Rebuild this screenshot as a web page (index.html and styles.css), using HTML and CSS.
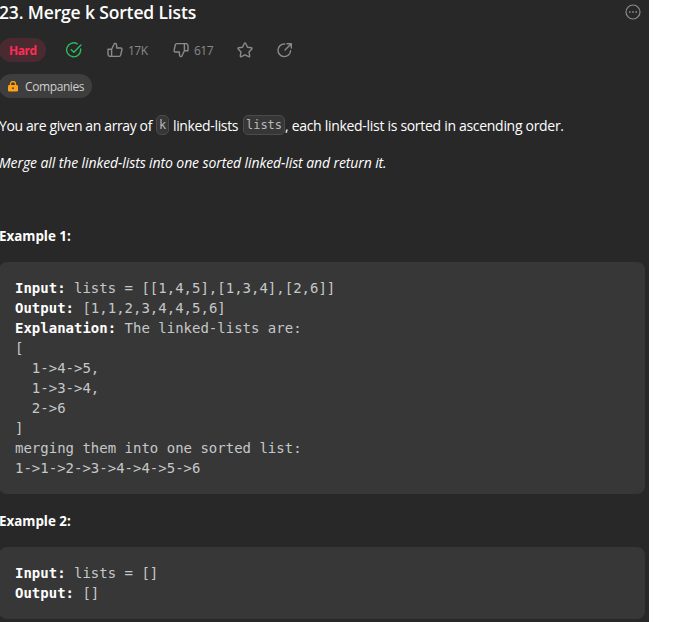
FILE: index.html
```html
<!DOCTYPE html>
<html lang="en">
<head>
<meta charset="utf-8">
<title>23. Merge k Sorted Lists</title>
<link rel="stylesheet" href="styles.css">
</head>
<body>
<main class="panel">
  <header class="heading">
    <h1 class="title">23. Merge k Sorted Lists</h1>
    <svg class="more" viewBox="0 0 16 16"><circle cx="8" cy="8" r="7" fill="none" stroke="currentColor" stroke-width="1.2"/><path d="M4 7.3h1.6v1.5H4zM7.2 7.3h1.6v1.5H7.2zM10.4 7.3H12v1.5h-1.6z" fill="currentColor"/></svg>
  </header>
  <div class="meta">
    <span class="difficulty">Hard</span>
    <svg class="icon solved" viewBox="0 0 16 16"><path d="M14.6 7A7 7 0 1 1 11.2 1.8M5.2 7.7l2.7 2.6 7-7.4"/></svg>
    <span class="vote up"><svg class="icon" viewBox="0 0 16 16"><path d="M1 7.2h3.6v7.2H2.3L1 12.6zM4.6 7.2L7 2.2c.5-1.2 2.6-.9 2.6 1V6h4.2c.8 0 1.3.7 1.1 1.5l-1.2 5.7c-.2.8-.7 1.2-1.5 1.2H4.6"/></svg><span class="count">17K</span></span>
    <span class="vote down"><svg class="icon" viewBox="0 0 16 16"><path d="M15 8.8h-3.6V1.6h2.3L15 3.4zM11.4 8.8L9 13.8c-.5 1.2-2.6.9-2.6-1V10H2.2c-.8 0-1.3-.7-1.1-1.5l1.2-5.7c.2-.8.7-1.2 1.5-1.2h7.6"/></svg><span class="count">617</span></span>
    <svg class="icon star" viewBox="0 0 16 16"><path d="M7.3 1.5q.7-.9 1.4 0l1.8 3.7 3.8.6q1.1.3.5 1.2L12 9.9l.7 4q0 1.1-1 .8L8 12.8l-3.7 1.9q-1 .3-1-.8l.7-4L1.2 7q-.6-.9.5-1.2l3.8-.6z"/></svg>
    <svg class="icon share" viewBox="0 0 16 16"><path d="M7.6 2A6.3 6.3 0 1 0 13.6 8.6M8 8L13.8 2.2M10 1.7h4.3V6"/></svg>
  </div>
  <div class="companies">
    <svg class="lock" viewBox="0 0 10 11"><path d="M2.5 4.5V3a2.5 2.5 0 0 1 5 0v1.5" fill="none" stroke="#ffa116" stroke-width="1.3"/><rect y="4" width="10" height="6.5" rx="1.3" fill="#ffa116"/><circle cx="5" cy="7.2" r=".9" fill="#3b3b3b"/></svg>
    <span class="companies-label">Companies</span>
  </div>
  <section class="description">
    <p class="intro"><span class="part-a">You are given an array of</span><code class="code-k">k</code><span class="part-b">linked-lists</span><code class="code-lists">lists</code><span class="part-c">, each linked-list is sorted in ascending order.</span></p>
    <p class="task"><em>Merge all the linked-lists into one sorted linked-list and return it.</em></p>
    <h2 class="example">Example 1:</h2>
<pre><strong>Input:</strong> lists = [[1,4,5],[1,3,4],[2,6]]
<strong>Output:</strong> [1,1,2,3,4,4,5,6]
<strong>Explanation:</strong> The linked-lists are:
[
  1-&gt;4-&gt;5,
  1-&gt;3-&gt;4,
  2-&gt;6
]
merging them into one sorted list:
1-&gt;1-&gt;2-&gt;3-&gt;4-&gt;4-&gt;5-&gt;6</pre>
    <h2 class="example second">Example 2:</h2>
<pre><strong>Input:</strong> lists = []
<strong>Output:</strong> []</pre>
  </section>
</main>
</body>
</html>
```
FILE: styles.css
```css
* { box-sizing: border-box; }
body { margin: 0; background: #fff; font-family: "Open Sans", "Noto Sans", sans-serif; overflow: hidden; }
.panel { width: 649px; height: 622px; background: #282828; color: #fff; overflow: hidden; }
h1, h2, p, pre { margin: 0; }
h1, h2, p { white-space: nowrap; }
svg { display: block; flex: none; }
.heading { display: flex; justify-content: space-between; height: 38px; padding-right: 8px; }
.title { font-size: 17.5px; font-weight: 600; line-height: 24px; letter-spacing: -0.15px; margin-left: -1px; }
.more { width: 16px; height: 16px; margin-top: 4px; color: #8c8c8c; }
.meta { display: flex; align-items: center; height: 24px; color: #8a8a8a; font-size: 12px; }
.difficulty { width: 47px; height: 24px; margin-left: -1px; padding-left: 10px; border-radius: 12px; background: #492a31; color: #ff2d55; font-weight: 700; line-height: 26px; letter-spacing: -0.5px; }
.icon { width: 16px; height: 16px; fill: none; stroke: currentColor; stroke-width: 1.4; stroke-linejoin: round; stroke-linecap: round; }
.solved { margin-left: 20px; color: #2cbb5d; }
.vote { display: flex; align-items: center; gap: 5px; }
.count { letter-spacing: -0.5px; }
.up { width: 66px; margin-left: 25px; }
.down { width: 64px; }
.star { margin-right: 24px; }
.companies { display: flex; align-items: center; width: 93px; height: 24px; margin: 12px 0 0 -1px; padding-left: 9px; gap: 7px; border-radius: 12px; background: #3e3e3e; color: #cfcfcf; font-size: 12px; line-height: 22px; letter-spacing: -0.4px; }
.companies-label { padding-top: 2px; }
.lock { width: 10px; height: 11px; }
.description { font-size: 14px; }
.intro { display: flex; align-items: center; height: 20px; margin-top: 17px; }
.task, .example { height: 20px; line-height: 21px; }
.task { margin: 17px 0 0 -1px; letter-spacing: -0.1px; }
.part-a, .part-b, .part-c { letter-spacing: -0.3px; line-height: 20px; padding-top: 1px; }
.part-a { width: 157px; margin-left: -1px; letter-spacing: -0.38px; }
.part-b { width: 70px; letter-spacing: -0.35px; }
code { height: 20px; border: 1px solid #4b4b4b; border-radius: 5px; background: #373737; color: #b8b8b8; font: 12px/18px "DejaVu Sans Mono", monospace; text-align: center; }
.code-k { width: 13px; margin-right: 4px; }
.code-lists { width: 42px; }
.example { margin: 54px 0 0 -1px; font-size: 13.4px; font-weight: 700; letter-spacing: -0.02px; }
.second { margin-top: 17px; }
pre { width: 646px; margin: 16px 0 0 -1px; padding: 16px; border-radius: 8px; background: #373737; color: #c5c8c9; font: 14px/20px "DejaVu Sans Mono", monospace; }
pre strong { color: #fff; font-weight: 700; }
```
